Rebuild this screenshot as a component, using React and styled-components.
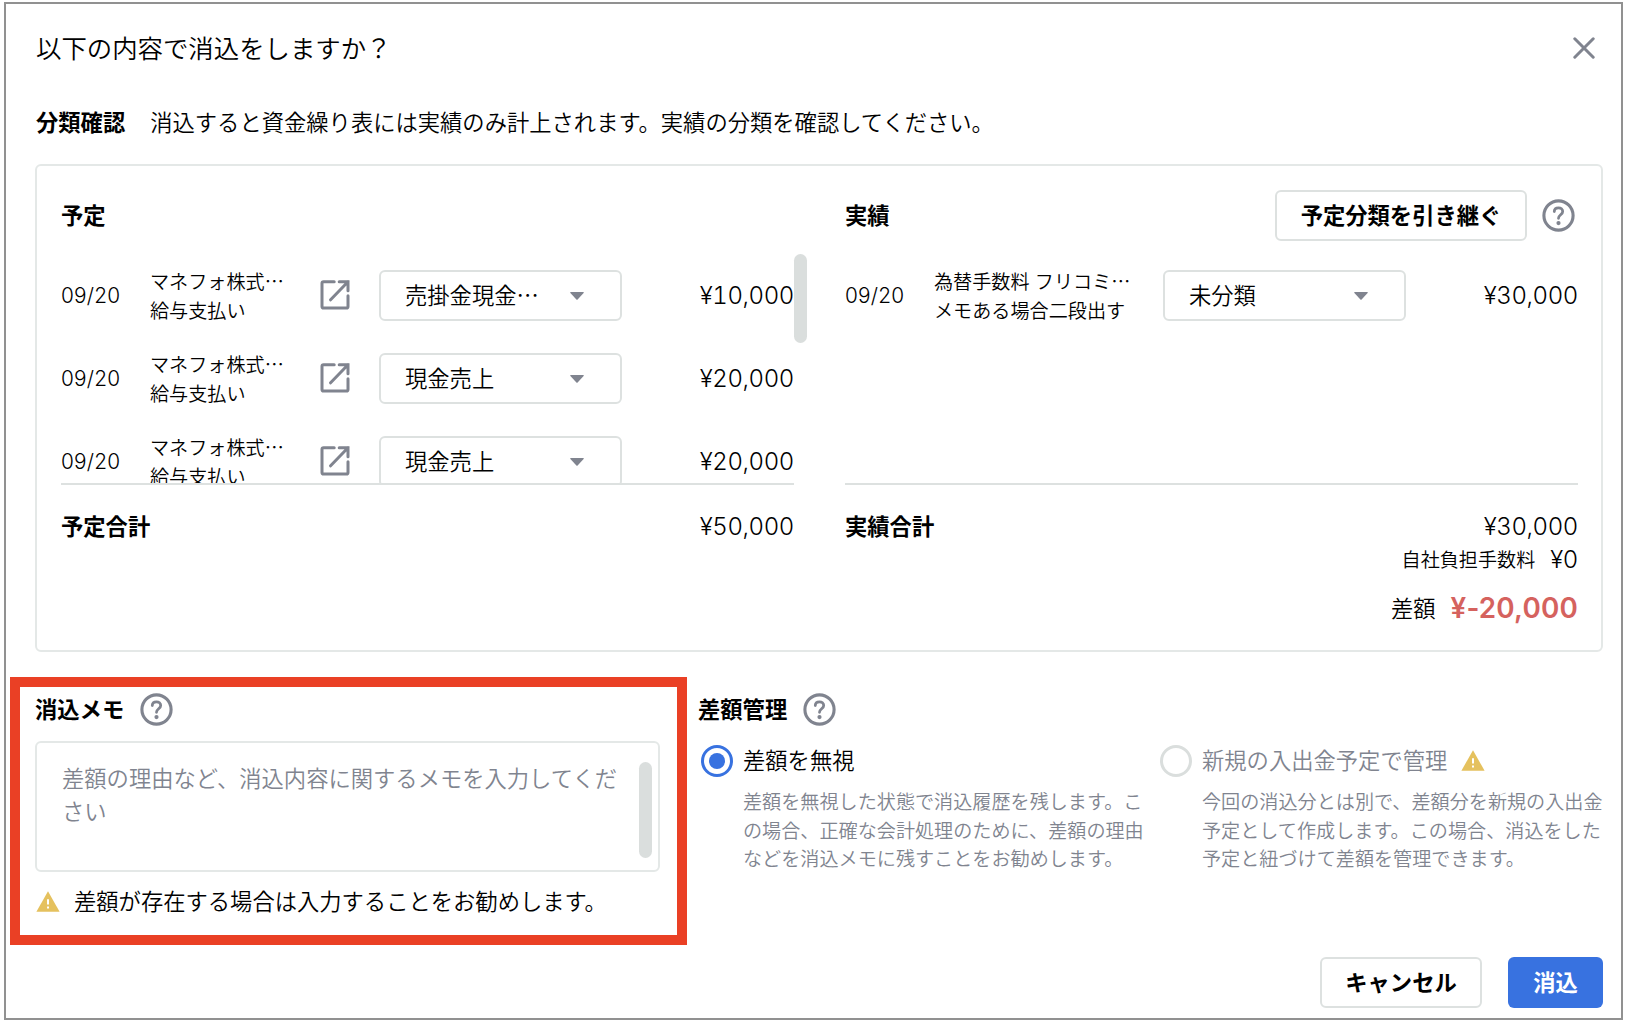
import React from 'react';
import styled, { createGlobalStyle } from 'styled-components';

const GlobalStyle = createGlobalStyle`
  body {
    margin: 0;
    background: #ffffff;
    color: #000000;
    font-family: "Noto Sans CJK JP", sans-serif;
    font-size: 22.3px;
    font-weight: 350;
  }

  * {
    box-sizing: border-box;
  }

  button {
    font-family: inherit;
    margin: 0;
  }
`;

const colors = {
  border: '#dde1e0',
  gray: '#80848f',
  blue: '#3872e0',
  red: '#d5625e',
  yellow: '#e5c15e',
  highlight: '#ea4025',
};

const Dialog = styled.div`
  width: 1619px;
  height: 1018px;
  margin: 2px 0 0 4px;
  padding: 25px 18px 0 29px;
  border: 2px solid #919191;
  background: #ffffff;
`;

const Header = styled.header`
  display: flex;
  align-items: center;
  justify-content: space-between;
  height: 38px;
  padding-right: 8px;
`;

const Title = styled.h1`
  margin: 0 0 0 1px;
  padding-bottom: 2px;
  font-size: 25.4px;
  font-weight: 350;
  line-height: 38px;
`;

const IconButton = styled.button`
  display: flex;
  padding: 0;
  border: 0;
  background: none;
`;

const Lead = styled.div`
  display: flex;
  align-items: center;
  gap: 25px;
  height: 34px;
  margin: 38px 0 0 1px;
`;

const Text = styled.span`
  padding-bottom: 3px;
`;

const Strong = styled(Text)`
  font-size: 22.3px;
  font-weight: 700;
`;

const Card = styled.section`
  display: flex;
  gap: 51px;
  height: 488px;
  margin-top: 25px;
  padding: 24px 23px 23px 24px;
  border: 2px solid #e4e8e7;
  border-radius: 6px;
`;

const Column = styled.div`
  width: 733px;
`;

const ColumnHeader = styled.div`
  display: flex;
  align-items: center;
  height: 51px;
`;

const ColumnActions = styled.div`
  display: flex;
  align-items: center;
  gap: 15px;
  margin-left: auto;
  padding-right: 3px;
`;

const Button = styled.button`
  height: 51px;
  width: ${(props) => props.$width}px;
  padding: 0 0 3px;
  border: ${(props) => (props.$primary ? '0' : `2px solid ${colors.border}`)};
  border-radius: 6px;
  background: ${(props) => (props.$primary ? colors.blue : '#ffffff')};
  color: ${(props) => (props.$primary ? '#ffffff' : '#000000')};
  font-size: 22.3px;
  font-weight: 700;
`;

const List = styled.div`
  position: relative;
  height: 231px;
  margin-top: 13px;
  overflow: hidden;
  border-bottom: 2px solid ${colors.border};
`;

const ListArea = styled.div`
  position: relative;
`;

const Scrollbar = styled.div`
  position: absolute;
  top: ${(props) => props.$top}px;
  right: ${(props) => props.$right}px;
  width: 13px;
  height: ${(props) => props.$height}px;
  border-radius: 7px;
  background: #dadedd;
`;

const Row = styled.div`
  display: flex;
  align-items: center;
  height: 83px;
`;

const DateText = styled.div`
  width: 89px;
  font-family: Inter, sans-serif;
  font-size: 20.8px;
  font-weight: 300;
  letter-spacing: 0.2px;
`;

const Detail = styled.div`
  width: ${(props) => (props.$wide ? '229px' : '170px')};
  font-size: 19.13px;
  line-height: 28.7px;
  white-space: nowrap;
  word-spacing: 1px;
`;

const LinkSlot = styled.div`
  display: flex;
  width: 59px;
  padding-bottom: 1px;
`;

const Select = styled.div`
  display: flex;
  align-items: center;
  justify-content: space-between;
  width: 243px;
  height: 51px;
  padding: 0 36px 0 24px;
  border: 2px solid ${colors.border};
  border-radius: 6px;
`;

const Amount = styled.span`
  margin-left: auto;
  font-family: Inter, sans-serif;
  font-size: 24px;
  font-weight: 300;
  font-feature-settings: "tnum";
  letter-spacing: -0.4px;
`;

const Summary = styled.div`
  display: flex;
  align-items: center;
  height: 33px;
  margin-top: ${(props) => props.$top || 0}px;
`;

const SummaryLabel = styled(Text)`
  margin-left: auto;
  margin-right: 15px;
  padding-bottom: 2px;
  font-size: ${(props) => (props.$small ? '19.13px' : '22.3px')};

  & + span {
    margin-left: 0;
  }
`;

const Difference = styled(Amount)`
  color: ${colors.red};
  font-size: 27.8px;
  font-weight: 600;
  font-feature-settings: normal;
  letter-spacing: 0.2px;
`;

const Lower = styled.div`
  display: flex;
  height: 292px;
  margin-top: 23px;
`;

const Memo = styled.section`
  position: relative;
  width: 663px;
  padding-top: 17px;
`;

const Highlight = styled.div`
  position: absolute;
  top: 2px;
  left: -25px;
  width: 677px;
  height: 268px;
  border: 10px solid ${colors.highlight};
`;

const SectionTitle = styled.div`
  display: flex;
  align-items: center;
  gap: 16px;
  height: 34px;
`;

const TextBox = styled.div`
  position: relative;
  width: 625px;
  height: 131px;
  margin-top: 15px;
  padding: 18px 36px 0 25px;
  border: 2px solid #e4e8e7;
  border-radius: 6px;
  color: ${colors.gray};
  line-height: 33.4px;
`;

const Notice = styled.div`
  display: flex;
  align-items: center;
  gap: 14px;
  height: 34px;
  margin: 12px 0 0 1px;
`;

const Manage = styled.section`
  padding-top: 17px;
`;

const Options = styled.div`
  display: flex;
  gap: 57px;
  margin-top: 18px;
`;

const Option = styled.div`
  width: 402px;
  color: ${(props) => (props.$muted ? colors.gray : '#000000')};
`;

const OptionLabel = styled.div`
  display: flex;
  align-items: center;
  height: 33px;
`;

const Radio = styled.span`
  display: flex;
  align-items: center;
  justify-content: center;
  width: 32px;
  height: 32px;
  margin: 0 10px 0 3px;
  border: 3px solid ${(props) => (props.$checked ? colors.blue : '#dadedd')};
  border-radius: 50%;

  &::after {
    content: "";
    width: 16px;
    height: 16px;
    border-radius: 50%;
    background: ${(props) => (props.$checked ? colors.blue : 'transparent')};
  }
`;

const OptionIcon = styled.span`
  display: flex;
  margin-left: 14px;
`;

const OptionText = styled.p`
  width: 403px;
  margin: 10px 0 0 45px;
  color: ${colors.gray};
  font-size: 19.13px;
  line-height: 28.7px;
`;

const Footer = styled.footer`
  display: flex;
  justify-content: flex-end;
  gap: 26px;
  margin-top: -10px;
`;

const CloseIcon = () => (
  <svg width="22" height="22" viewBox="0 0 22 22" fill="none" stroke={colors.gray} strokeWidth="3" strokeLinecap="round">
    <path d="M1.8 1.8 L20.2 20.2 M20.2 1.8 L1.8 20.2" />
  </svg>
);

const HelpIcon = () => (
  <svg width="33" height="33" viewBox="0 0 33 33" fill="none" stroke={colors.gray}>
    <circle cx="16.5" cy="16.5" r="14.6" strokeWidth="3.1" />
    <path d="M12.3 12.6 C12.3 10.2 14.1 8.8 16.5 8.8 C18.9 8.8 20.7 10.3 20.7 12.4 C20.7 15.6 16.5 15.9 16.5 19.3" strokeWidth="2.8" strokeLinecap="round" />
    <circle cx="16.5" cy="24.1" r="2.1" fill={colors.gray} stroke="none" />
  </svg>
);

const ExternalIcon = () => (
  <svg width="30" height="30" viewBox="0 0 30 30" fill="none" stroke={colors.gray} strokeWidth="3">
    <path d="M14.2 1.7 H3.6 Q2 1.7 2 3.3 V26.4 Q2 28 3.6 28 H26.4 Q28 28 28 26.4 V15.8" strokeLinecap="round" />
    <path d="M19.2 1.7 H28 V10.8 M28 1.7 L10.6 19.8" strokeLinecap="round" />
  </svg>
);

const CaretIcon = () => (
  <svg width="14" height="8" viewBox="0 0 14 8" fill={colors.gray}>
    <path d="M0.8 0 H13.2 Q14.2 0.2 13.6 1 L7.6 7.6 Q7 8.1 6.4 7.6 L0.4 1 Q-0.2 0.2 0.8 0 Z" />
  </svg>
);

const WarningIcon = () => (
  <svg width="24" height="21" viewBox="0 0 24 21">
    <path d="M12 0.3 L23.6 20.7 H0.4 Z" fill={colors.yellow} />
    <path d="M11 8.3 H13 V13.5 H11 Z M11 15.4 H13 V17.4 H11 Z" fill="#ffffff" />
  </svg>
);

const plans = [
  { date: '09/20', name: 'マネフォ株式…', memo: '給与支払い', category: '売掛金現金…', amount: '¥10,000' },
  { date: '09/20', name: 'マネフォ株式…', memo: '給与支払い', category: '現金売上', amount: '¥20,000' },
  { date: '09/20', name: 'マネフォ株式…', memo: '給与支払い', category: '現金売上', amount: '¥20,000' },
];

const results = [
  { date: '09/20', name: '為替手数料 フリコミ…', memo: 'メモある場合二段出す', category: '未分類', amount: '¥30,000' },
];

const Entry = ({ item, linked }) => (
  <Row>
    <DateText>{item.date}</DateText>
    <Detail $wide={!linked}>
      <div>{item.name}</div>
      <div>{item.memo}</div>
    </Detail>
    {linked && <LinkSlot><ExternalIcon /></LinkSlot>}
    <Select>
      <Text>{item.category}</Text>
      <CaretIcon />
    </Select>
    <Amount>{item.amount}</Amount>
  </Row>
);

const App = () => {
  return (
    <>
      <GlobalStyle />
      <Dialog>
        <Header>
          <Title>以下の内容で消込をしますか？</Title>
          <IconButton type="button"><CloseIcon /></IconButton>
        </Header>

        <Lead>
          <Strong>分類確認</Strong>
          <Text>消込すると資金繰り表には実績のみ計上されます。実績の分類を確認してください。</Text>
        </Lead>

        <Card>
          <Column>
            <ColumnHeader>
              <Strong>予定</Strong>
            </ColumnHeader>
            <ListArea>
              <List>
                {plans.map((item, index) => <Entry key={index} item={item} linked />)}
              </List>
              <Scrollbar $top={0} $right={-13} $height={89} />
            </ListArea>
            <Summary $top={25}>
              <Strong>予定合計</Strong>
              <Amount>¥50,000</Amount>
            </Summary>
          </Column>

          <Column>
            <ColumnHeader>
              <Strong>実績</Strong>
              <ColumnActions>
                <Button type="button" $width={252}>予定分類を引き継ぐ</Button>
                <HelpIcon />
              </ColumnActions>
            </ColumnHeader>
            <List>
              {results.map((item, index) => <Entry key={index} item={item} />)}
            </List>
            <Summary $top={25}>
              <Strong>実績合計</Strong>
              <Amount>¥30,000</Amount>
            </Summary>
            <Summary>
              <SummaryLabel $small>自社負担手数料</SummaryLabel>
              <Amount>¥0</Amount>
            </Summary>
            <Summary $top={15}>
              <SummaryLabel>差額</SummaryLabel>
              <Difference>¥-20,000</Difference>
            </Summary>
          </Column>
        </Card>

        <Lower>
          <Memo>
            <SectionTitle>
              <Strong>消込メモ</Strong>
              <HelpIcon />
            </SectionTitle>
            <TextBox>
              差額の理由など、消込内容に関するメモを入力してください
              <Scrollbar $top={19} $right={6} $height={96} />
            </TextBox>
            <Notice>
              <WarningIcon />
              <Text>差額が存在する場合は入力することをお勧めします。</Text>
            </Notice>
            <Highlight />
          </Memo>

          <Manage>
            <SectionTitle>
              <Strong>差額管理</Strong>
              <HelpIcon />
            </SectionTitle>
            <Options>
              <Option>
                <OptionLabel>
                  <Radio $checked />
                  <Text>差額を無視</Text>
                </OptionLabel>
                <OptionText>
                  差額を無視した状態で消込履歴を残します。この場合、正確な会計処理のために、差額の理由などを消込メモに残すことをお勧めします。
                </OptionText>
              </Option>
              <Option $muted>
                <OptionLabel>
                  <Radio />
                  <Text>新規の入出金予定で管理</Text>
                  <OptionIcon><WarningIcon /></OptionIcon>
                </OptionLabel>
                <OptionText>
                  今回の消込分とは別で、差額分を新規の入出金予定として作成します。この場合、消込をした予定と紐づけて差額を管理できます。
                </OptionText>
              </Option>
            </Options>
          </Manage>
        </Lower>

        <Footer>
          <Button type="button" $width={162}>キャンセル</Button>
          <Button type="button" $width={95} $primary>消込</Button>
        </Footer>
      </Dialog>
    </>
  );
};

export default App;
